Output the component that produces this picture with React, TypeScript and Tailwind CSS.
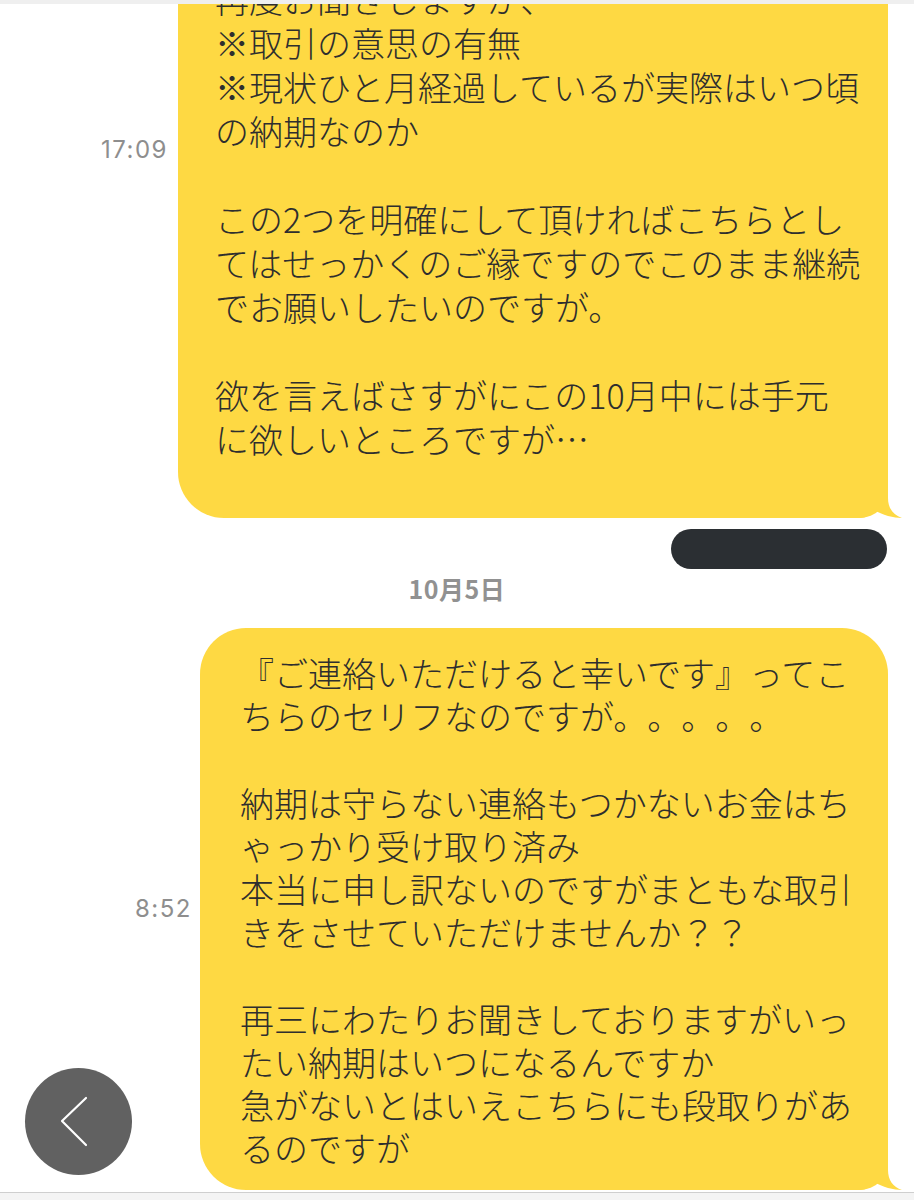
import React from 'react';

const firstLines = [
  '再度お聞きしますが、',
  '※取引の意思の有無',
  '※現状ひと月経過しているが実際はいつ頃',
  'の納期なのか',
  '',
  'この2つを明確にして頂ければこちらとし',
  'てはせっかくのご縁ですのでこのまま継続',
  'でお願いしたいのですが。',
  '',
  '欲を言えばさすがにこの10月中には手元',
  'に欲しいところですが…',
];

const secondLines = [
  '『ご連絡いただけると幸いです』ってこ',
  'ちらのセリフなのですが。。。。。',
  '',
  '納期は守らない連絡もつかないお金はち',
  'ゃっかり受け取り済み',
  '本当に申し訳ないのですがまともな取引',
  'きをさせていただけませんか？？',
  '',
  '再三にわたりお聞きしておりますがいっ',
  'たい納期はいつになるんですか',
  '急がないとはいえこちらにも段取りがあ',
  'るのですが',
];

const jp = { fontFamily: '"Noto Sans CJK JP", "Noto Sans", sans-serif' };
const latin = { fontFamily: 'Inter, "Liberation Sans", sans-serif' };

// 吹き出しのしっぽ（右下）
const Tail: React.FC = () => (
  <svg
    className="absolute bottom-0 right-[-14px] block"
    width="56"
    height="30"
    viewBox="0 0 56 30"
  >
    <path
      d="M0 0 H42 V10 C42 20 47 27 56 30 C48 30 36 27 28 22 C24 27 20 30 14 30 H0 Z"
      fill="#fed943"
    />
  </svg>
);

const Lines: React.FC<{lines: string[]; leading: string}> = ({lines, leading}) => (
  <div
    className={`text-[34px] font-light text-[#2e2e2e] whitespace-pre [text-spacing-trim:space-all] ${leading}`}
    style={jp}
  >
    {lines.map((l, i) => (
      <div key={i}>{l || '\u00a0'}</div>
    ))}
  </div>
);

export default function App() {
  return (
    <div className="relative w-[914px] h-[1200px] bg-white overflow-hidden flex flex-col">
      <div className="h-[4px] bg-[#efefef] shrink-0" />

      {/* 1つ目のメッセージ */}
      <div className="flex justify-end items-start gap-[10px] pr-[26px] shrink-0">
        <div className="mt-[132px] text-[24px] leading-[28px] tracking-[1.5px] text-[#8e8e8e]" style={latin}>
          17:09
        </div>
        <div className="relative w-[710px]">
          <div className="h-[514px] overflow-hidden bg-[#fed943] rounded-bl-[46px] rounded-br-[28px] pl-[37px]">
            <div className="mt-[-27px]">
              <Lines lines={firstLines} leading="leading-[44px]" />
            </div>
          </div>
          <Tail />
        </div>
      </div>

      {/* 既読/名前（黒塗り） */}
      <div className="mt-[11px] flex justify-end pr-[27px] shrink-0">
        <div className="w-[216px] h-[40px] rounded-full bg-[#2b2f33]" />
      </div>

      {/* 日付 */}
      <div
        className="mt-[6px] h-[28px] flex justify-center items-center text-[25px] font-bold text-[#919191] tracking-[0.5px] shrink-0"
        style={jp}
      >
        10月5日
      </div>

      {/* 2つ目のメッセージ */}
      <div className="mt-[25px] flex justify-end items-center gap-[8px] pr-[26px] shrink-0">
        <div className="text-[24px] leading-[28px] tracking-[1.5px] text-[#8e8e8e]" style={latin}>
          8:52
        </div>
        <div className="relative w-[688px]">
          <div className="h-[562px] bg-[#fed943] rounded-tl-[46px] rounded-tr-[46px] rounded-bl-[46px] rounded-br-[28px] pl-[40px] pt-[23px]">
            <Lines lines={secondLines} leading="leading-[43.2px]" />
          </div>
          <Tail />
        </div>
      </div>

      <div className="mt-[2px] flex-1 border-t border-[#cfcfcf] bg-[#f4f4f4]" />

      {/* 戻るボタン */}
      <div className="absolute left-[25px] top-[1068px] w-[107px] h-[107px] rounded-full bg-[#616161] flex items-center justify-center">
        <svg width="107" height="107" viewBox="0 0 107 107">
          <path
            d="M61 30 L37 53 L61 77"
            fill="none"
            stroke="#ffffff"
            strokeWidth="2.2"
            strokeLinecap="round"
            strokeLinejoin="round"
          />
        </svg>
      </div>
    </div>
  );
}
